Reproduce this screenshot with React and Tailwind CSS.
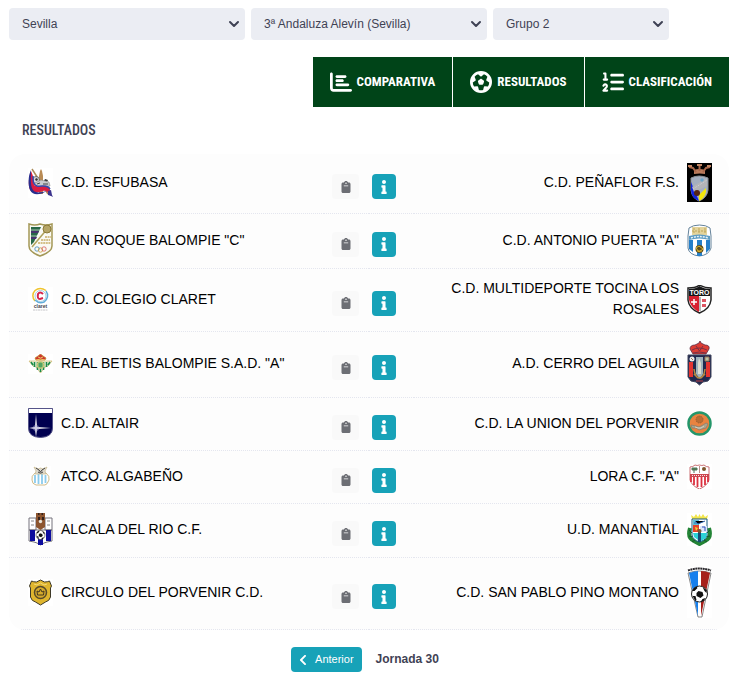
import React from "react";
import { FaChartBar, FaFutbol, FaListOl, FaClipboard } from "react-icons/fa6";
import { FaInfo, FaChevronLeft } from "react-icons/fa";

const display = "font-['Liberation_Sans_Narrow','Roboto_Condensed','DejaVu_Sans_Condensed',sans-serif]";

function Crest({ h, children }) {
  return (
    <svg width="25" height={h} viewBox={`0 0 25 ${h}`} className="shrink-0" aria-hidden="true">
      {children}
    </svg>
  );
}

function Ball({ x, y, r }) {
  return (
    <g transform={`translate(${x} ${y}) scale(${r / 8})`}>
      <circle r="8" fill="#fff" stroke="#222" strokeWidth="1" />
      <path d="M-1-3l4 1 1 3.500-3 2.500-4-2 0-3zM-7-3l1-2.500 3-2 1 1.500-3 3zM3-7l4 3v3l-2-2zM-7 2l3 0 1 4-1 1zM3 5l3-1-2 3-3 1z" fill="#111" />
    </g>
  );
}

const Esfubasa = () => (
  <Crest h={30}>
    <path fill="#fff" d="M0 0h25v30H0z" />
    <path d="M4 1L20 26" stroke="#a98a57" strokeWidth="1.500" />
    <path d="M11 8l1-5 1-2 1 2 1 5v18h-4z" fill="#b98c56" />
    <circle cx="8" cy="12" r="3.500" fill="#d5d7dc" stroke="#555" strokeWidth=".8" />
    <path d="M7 11l2-1 1 2-2 1zM17 11l3 1-1 2-3-1z" fill="#333" />
    <path d="M7 15l6-3 8 2 1 4-8 1-7-1z" fill="#c9cbd0" stroke="#8b8583" strokeWidth=".6" />
    <path d="M9 16l3-1m3 1h5" stroke="#444" />
    <path d="M3 3l2 5 1 9c4 3 8 0 13 1 3 1 4 6 4 10-3-3-4-6-8-5-4 1-8 3-12 0-3-3-3-11 0-20z" fill="#d91d42" />
    <path d="M3 2c-3 6-3 15-1 20 3 6 10 5 17 1-5 1-11 3-14-1-3-4-2-12-2-20z" fill="#282f8f" />
    <path d="M5 8c0 5 0 9 4 10 5 1 10-2 13 3" fill="none" stroke="#3349ad" strokeWidth="1.500" />
    <path d="M20 23l3-1 1 5 1 2-2-1-3-1z" fill="#3b348e" />
  </Crest>
);
const SanRoque = () => (
  <Crest h={34}>
    <path d="M1 1q6 2 11 0 6 2 12 0v22q0 6-12 10Q1 29 1 23z" fill="#fafaf4" stroke="#a39756" strokeWidth="1.500" />
    <path d="M3 4h10l-7 15-3 3z" fill="#286847" />
    <path d="M3 8h8l-1 2H3zm0 6h6l-1 2H3z" fill="#46336c" />
    <path d="M3 7h10M3 13h7" stroke="#fff" strokeWidth=".6" />
    <path d="M4 24L20 5" stroke="#afa15a" strokeWidth="1.500" />
    <circle cx="19" cy="6" r="4" fill="#b5a567" stroke="#8c7a36" />
    <path d="M17 14h6m-10 3h9M10 20h13" stroke="#c9ad65" strokeWidth="1.500" strokeDasharray="2 .6" />
    <g fill="none" strokeWidth=".8"><circle cx="9" cy="26" r="2.200" stroke="#4388bd" /><circle cx="12.500" cy="27" r="2.200" stroke="#c9a039" /><circle cx="16" cy="26" r="2.200" stroke="#d55d5d" /></g>
  </Crest>
);
const Claret = () => (
  <Crest h={25}>
    <path fill="#fff" d="M0 0h25v25H0z" />
    <g fill="none" strokeWidth="1.500">
      <path d="M7 14a7.500 7.500 0 0 1 0-10.500q5-4 11 0" stroke="#efc42e" />
      <path d="M18 4a7.500 7.500 0 0 1-2 11q-5 2-9-2" stroke="#60acd9" />
      <circle cx="12.500" cy="9" r="5.500" stroke="#a5cde2" strokeWidth="1" />
      <path d="M15 7q-3-3-5 0-1 5 2 5l3-1" stroke="#d6254a" strokeWidth="2" />
    </g>
    <text x="12.500" y="21" textAnchor="middle" className="font-['Liberation_Sans'] text-[5px] font-bold" fill="#44434c">claret</text>
    <path d="M5 23h15" stroke="#b7b7bb" strokeWidth=".8" strokeDasharray="2 .5" />
  </Crest>
);
const Betis = () => (
  <Crest h={20}>
    <path fill="#fff" d="M0 0h25v20H0z" />
    <path d="M1 7h23l-4 5-3 1-4.500 6L8 13l-3-1z" fill="#f4f3df" stroke="#cbb56b" strokeWidth=".7" />
    <path d="M3 8l2 3M6.500 8v5M9.500 8v8M12.500 8v10M15.500 8v8M18.500 8v5M22 8l-2 3" stroke="#178d49" strokeWidth="1.600" />
    <circle cx="12.500" cy="11" r="3.500" fill="#86bd7b" stroke="#d8c873" />
    <path d="M11 10h3m-3 2h3" stroke="#238c4a" />
    <path d="M8 6L7 4l3-2 2.500-2L15 2l3 2-1 2z" fill="#ce342f" stroke="#c38a32" strokeWidth=".8" />
    <path d="M8 6q4.500-2 9 0M10 3l2.500 1L15 3" stroke="#edca62" fill="none" />
  </Crest>
);
const Altair = () => (
  <Crest h={30}>
    <path d="M.5.5h24V20q0 9-12 9.500Q.5 29 .5 20z" fill="#000050" stroke="#555489" />
    <path fill="#fff" d="M1 1h23v4H1z" />
    <path d="M8 6l1 13 14 1-14 1-1 8-1-8-6-1 6-1z" fill="#fff" />
    <circle cx="8" cy="20" r="3" fill="#aaa9d2" opacity=".6" />
  </Crest>
);
const Algabeno = () => (
  <Crest h={20}>
    <path fill="#fff" d="M2 0h21v20H2z" />
    <path d="M7 7h11q4 3 3 7-2 5-4 5H8q-4-1-4-5-1-4 3-7z" fill="#fff" stroke="#cfbc8a" />
    <path d="M7 9v8m3.500-9v10M14 8v10m3.500-9v8" stroke="#8ccced" strokeWidth="1.800" />
    <path d="M6 1l4 2 2.500-1L15 3l4-2-2 4 1 3H7l1-3z" fill="#ddd9cc" stroke="#c9b98e" strokeWidth=".7" />
    <path d="M8 2l3 2 1.500 2L14 4l3-2M10 6l2 1h1l2-1" stroke="#444" fill="none" />
  </Crest>
);
const Alcala = () => (
  <Crest h={33}>
    <path d="M1 5h7v12H1zm16 0h7v12h-7zM1 17h23v11l-5 1-3 1-3.500 2L9 30l-3-1-5-1z" fill="#fff" stroke="#75737c" />
    <path d="M2 17h5v11H2zm8 6h5v9h-5zm8-6h5v11h-5z" fill="#0c0c9e" />
    <path d="M8 0h9v14l-4.500 3L8 14z" fill="#8c552f" />
    <path d="M10 0h1.500v2H10zm3.500 0H15v2h-1.500zM10 4h2v3h-2zm4 0h2v3h-2z" fill="#33211b" />
    <circle cx="12.500" cy="8.500" r="1.700" fill="#e7e3d8" />
    <path d="M3 8h3m-3 4h3m13-4h3m-3 4h3" stroke="#888" />
    <Ball x={12.5} y={22} r={4.5} />
  </Crest>
);
const Circulo = () => (
  <Crest h={27}>
    <path fill="#fff" d="M0 0h25v27H0z" />
    <path d="M12.500 1l4 2q3 0 5-1l2 5-1 2v9q-1 4-5 5l-5 3-5-3q-4-1-5-5V9L1.500 7l2-5q2 1 5 1z" fill="#dfb52e" stroke="#3d3928" />
    <circle cx="12.500" cy="13.500" r="6" fill="#d6aa2c" stroke="#574a29" strokeWidth="1.500" />
    <path d="M9.500 16L9 12l2 1 1.500-3 1.500 3 2-1-.5 4z" fill="none" stroke="#44381f" />
    <path d="M6 5l3 1 3.500-2L16 6l3-1" stroke="#f4d97a" fill="none" />
  </Crest>
);
const Penaflor = () => (
  <Crest h={39}>
    <path d="M0 0h25v39H0z" fill="#000" />
    <path d="M7 7q5-2 11 0v4q-5-1-11 0z" fill="#b97b5c" />
    <path d="M2 4l4 1 3 4M23 4l-4 1-3 4M12.500 1v7" stroke="#a9674a" strokeWidth="2" fill="none" />
    <path d="M1 3h4M10 2h5M20 3h4" stroke="#c48663" strokeWidth="2" />
    <path d="M4 15q8-4 17 0v12q-1 8-9 11-7-3-8-11z" fill="#a4afbf" stroke="#8d9399" />
    <path d="M4 19l8 19Q4 35 4 27z" fill="#1023df" />
    <path d="M12 32l7-7v4q-2 7-7 9z" fill="#f2e60b" />
    <path d="M5 24L20 15v8L7 29z" fill="#b3b4b8" />
    <path d="M6 26L20 17" stroke="#d1d3d9" strokeDasharray="1 1" />
    <circle cx="10" cy="30" r="3" fill="#552513" />
    <circle cx="15" cy="17" r="1.700" fill="#67a5cb" />
  </Crest>
);
const Puerta = () => (
  <Crest h={33}>
    <path d="M2 4q4-3 10.500-3T23 4l1 8v12q-2 7-11.500 8Q2 31 1 24V12z" fill="#fff" stroke="#64829a" />
    <path d="M2 16h4v12l-4-3zm8 0h5v16h-5zm9 0h4v9l-4 4z" fill="#267fc8" />
    <path d="M5 3h15v8H5z" fill="#e4d49c" />
    <path d="M7 4v6m5-6v6m6-6v6M5 7h15" stroke="#bda55b" strokeDasharray="2 1" />
    <path d="M2 12q10-3 21 0v4q-11-3-21 0z" fill="#5c9bc3" />
    <path d="M4 14q8-3 17 0" fill="none" stroke="#e9f4f8" strokeWidth="1.500" strokeDasharray="2 1" />
    <circle cx="12.500" cy="25" r="4" fill="#5d4b17" /><path d="M9 24l3-2 4 3-4 3zM10 27h5" stroke="#d9b330" fill="none" />
  </Crest>
);
const Toro = () => (
  <Crest h={29}>
    <path d="M1 3q8 0 11.500-3Q17 3 24 3v12q-1 9-11.500 13Q2 24 1 15z" fill="#fff" stroke="#222" strokeWidth="1.500" />
    <path d="M2 11h10v16Q4 23 2 15z" fill="#d8202f" />
    <path d="M2 4q7 0 10.500-3Q17 4 23 4v7H2z" fill="#171719" />
    <text x="12.500" y="10" textAnchor="middle" className="font-['Liberation_Sans'] text-[7px] font-bold" fill="#fff">TORO</text>
    <path d="M7 14v6m-3-3h6" stroke="#fff" strokeWidth="1.500" />
    <path d="M15 14h4v3h-4zm0 5h4v3h-4z" fill="#dd5562" />
    <path d="M13 12v14" stroke="#333" strokeWidth=".7" />
  </Crest>
);
const Cerro = () => (
  <Crest h={45}>
    <path d="M6 13L3 8q0-4 5-4l4-2 1-2 1 2 4 2q5 0 4 4l-3 5z" fill="#dd3c33" stroke="#5c2a42" strokeWidth=".8" />
    <path d="M5 9q7-4 15 0M9 5l3.500 5L16 5M6 12q6-2 13 0" fill="none" stroke="#793244" />
    <path d="M1 14h23v22l-3 4-5 1-3.500 3L9 41l-5-1-3-4z" fill="#20294e" stroke="#40445d" />
    <path d="M2 21h4v15H2zm17 0h4v15h-4z" fill="#e33330" />
    <path d="M9 16h7v17l-3 5-4-5z" fill="#9eb2bc" />
    <path d="M12 17l2 5v11h-3V22z" fill="#dedccf" />
    <circle cx="5" cy="18" r="2.500" fill="#eee" /><path d="M4 17l2 2M18 16h4v4h-4z" fill="#b8c4a8" stroke="#9b7655" />
    <path d="M7 28q1 8 5 9 5 0 6-9M7 33l4 4m7-4l-4 4" fill="none" stroke="#b48a43" strokeWidth="1.500" />
    <path d="M9 40h7" stroke="#8a3948" strokeWidth="1.500" />
  </Crest>
);
const Union = () => (
  <Crest h={25}>
    <circle cx="12.500" cy="12.500" r="11" fill="#e98340" stroke="#24966a" strokeWidth="2.500" />
    <circle cx="12.500" cy="8.500" r="3.500" fill="#b96d35" stroke="#925b34" strokeDasharray="1 1" />
    <path d="M4 14l5 1 3 1 4-2 3-2 2 1-2 4-4 1-3 1-3-2-4 0z" fill="#aaa48d" stroke="#827b6e" strokeWidth=".7" />
    <path d="M8 16l3 1 3 0 3-2" stroke="#d4d0c2" fill="none" />
  </Crest>
);
const Lora = () => (
  <Crest h={25}>
    <path fill="#fff" d="M0 0h25v25H0z" />
    <path d="M3 3q3 0 5-2 2 1 4.500 0Q15 2 17 1q2 2 5 2v13q-2 6-9.500 9Q5 22 3 16z" fill="#fff" stroke="#cb7377" />
    <path d="M4 13v5m3-5v8m3.500-8v10m4-10v10m3.500-10v8m3-8v5" stroke="#dc303f" strokeWidth="1.800" />
    <path d="M3 10h19v3H3z" fill="#cc4650" /><path d="M5 11.500h15" stroke="#f8dfe1" strokeDasharray="1 1" />
    <path d="M5 4h5v2H5zM7 5v4" stroke="#52745a" fill="#4a7e51" />
    <circle cx="17" cy="5" r="2" fill="#7c552d" /><path d="M12.500 2v7" stroke="#b9918b" />
  </Crest>
);
const Manantial = () => (
  <Crest h={33}>
    <path fill="#fff" d="M0 0h25v33H0z" />
    <path d="M5 6L4 2l3 2 2-3 2 3 1.500-3L14 4l2-3 2 3 3-2-1 4z" fill="#f3e64c" />
    <path d="M3 15q-3 10 4 13l5.500 3 5.500-3q7-3 4-13" fill="none" stroke="#238436" strokeWidth="4" />
    <path d="M2 17l3 3m-3 3l4 1m-1 5l3-2m15-10l-3 3m3 3l-4 1m1 5l-3-2" stroke="#165c28" />
    <path d="M5 6h15v17q-2 5-7.500 6Q6 27 5 22z" fill="#fff" stroke="#185a80" />
    <path d="M6 7h6v5H6z" fill="#5ebed2" /><path d="M8 8l3 3 7-3M7 10h3" stroke="#2e68b5" />
    <path d="M6 12h6v7H6z" fill="#e44228" /><path d="M8 14l3 1-2 3z" fill="#f2d136" />
    <path d="M13 13h7v6h-7z" fill="#dce6f9" /><path d="M15 14h3v4" stroke="#3151b8" fill="none" />
    <path d="M6 20h5v7l-4-3zm8 0h6l-1 5-5 3z" fill="#2cd2d6" /><path d="M11 19h3v10h-3z" fill="#194c75" />
    <circle cx="12.500" cy="18" r="2" fill="#7a5630" />
  </Crest>
);
const Montano = () => (
  <Crest h={51}>
    <path fill="#fff" d="M0 0h25v51H0z" />
    <path d="M1 3.500q11-4 23 0" fill="none" stroke="#29272b" strokeWidth="2" strokeDasharray="2 .5" />
    <path d="M1 6q11-4 23 0L15 50h-4z" fill="#fff" stroke="#555" strokeWidth=".7" />
    <path d="M2 6q6-2 9-2v45z" fill="#1780ed" /><path d="M14 4q5 0 9 2l-9 43z" fill="#a6201b" />
    <Ball x={12.5} y={27} r={8} />
  </Crest>
);

const matches = [
  ["C.D. ESFUBASA", Esfubasa, "C.D. PEÑAFLOR F.S.", Penaflor],
  ['SAN ROQUE BALOMPIE "C"', SanRoque, 'C.D. ANTONIO PUERTA "A"', Puerta],
  ["C.D. COLEGIO CLARET", Claret, "C.D. MULTIDEPORTE TOCINA LOS ROSALES", Toro],
  ['REAL BETIS BALOMPIE S.A.D. "A"', Betis, "A.D. CERRO DEL AGUILA", Cerro],
  ["C.D. ALTAIR", Altair, "C.D. LA UNION DEL PORVENIR", Union],
  ["ATCO. ALGABEÑO", Algabeno, 'LORA C.F. "A"', Lora],
  ["ALCALA DEL RIO C.F.", Alcala, "U.D. MANANTIAL", Manantial],
  ["CIRCULO DEL PORVENIR C.D.", Circulo, "C.D. SAN PABLO PINO MONTANO", Montano],
];

function Filter({ label, value }) {
  return (
    <div className="relative">
      <select aria-label={label} className="h-8 w-full appearance-none rounded bg-[#ebedf3] pr-8 pl-[13px] text-xs text-[#3f4254]">
        <option>{value}</option>
      </select>
      <svg viewBox="0 0 12 12" className="pointer-events-none absolute top-[10px] right-[5px] size-3" fill="none" stroke="#3f4254" strokeWidth="2" strokeLinecap="round" strokeLinejoin="round" aria-hidden="true">
        <path d="M2 4l4 4 4-4" />
      </svg>
    </div>
  );
}

function NavButton({ icon: Icon, children }) {
  return (
    <button className={`flex h-[50px] items-center gap-[5px] bg-[#004418] px-[17px] text-[13px] font-bold text-white ${display}`}>
      <Icon className="size-[22px]" aria-hidden="true" />
      {children}
    </button>
  );
}

export default function App() {
  return (
    <main className="bg-white px-2 pt-2 pl-[9px] font-['Liberation_Sans',Arial,sans-serif] text-[#3f4254]">
      <div className="grid grid-cols-[236fr_236fr_176fr_54fr] gap-[6px]">
        <Filter label="Provincia" value="Sevilla" />
        <Filter label="Competición" value="3ª Andaluza Alevín (Sevilla)" />
        <Filter label="Grupo" value="Grupo 2" />
      </div>
      <nav className="mt-[17px] flex justify-end gap-px">
        <NavButton icon={FaChartBar}>COMPARATIVA</NavButton>
        <NavButton icon={FaFutbol}>RESULTADOS</NavButton>
        <NavButton icon={FaListOl}>CLASIFICACIÓN</NavButton>
      </nav>
      <h1 className={`mt-[11px] pl-[13px] text-sm leading-6 font-medium ${display}`}>RESULTADOS</h1>
      <table className="mt-3 w-full table-fixed border-separate border-spacing-0 overflow-hidden rounded-2xl bg-[#fdfdfd] text-sm leading-[21px] text-black">
        <colgroup>
          <col />
          <col className="w-[45px]" />
          <col className="w-[45px]" />
          <col />
        </colgroup>
        <tbody>
          {matches.map(([home, HomeCrest, away, AwayCrest]) => (
            <tr key={home} className="h-[53px] *:border-b *:border-dotted *:border-[#e4e6ef]">
              <td className="pt-[9px] pb-[11px] pl-[19px]">
                <div className="flex items-center gap-2">
                  <HomeCrest />
                  <span>{home}</span>
                </div>
              </td>
              <td className="pt-[6px] pl-2">
                <button aria-label="Acta" className="flex h-[25px] w-[27px] items-center justify-center rounded bg-[#f9f9f9] text-[#6c6e74]">
                  <FaClipboard className="size-3" />
                </button>
              </td>
              <td className="pt-[6px] pl-[3px]">
                <button aria-label="Información" className="flex h-[25px] w-6 items-center justify-center rounded bg-[#17a2b8] text-white">
                  <FaInfo className="size-[14px]" />
                </button>
              </td>
              <td className="pt-[9px] pr-[17px] pb-[11px]">
                <div className="flex items-center justify-end gap-2 text-right">
                  <span>{away}</span>
                  <AwayCrest />
                </div>
              </td>
            </tr>
          ))}
        </tbody>
      </table>
      <footer className="mt-[17px] flex items-start justify-center gap-[14px] pr-2">
        <button className="flex h-[25px] items-center gap-2 rounded bg-[#17a2b8] px-2 text-[11px] text-white">
          <FaChevronLeft className="h-3 w-2" aria-hidden="true" />
          Anterior
        </button>
        <strong className="text-xs leading-6">Jornada 30</strong>
      </footer>
    </main>
  );
}
